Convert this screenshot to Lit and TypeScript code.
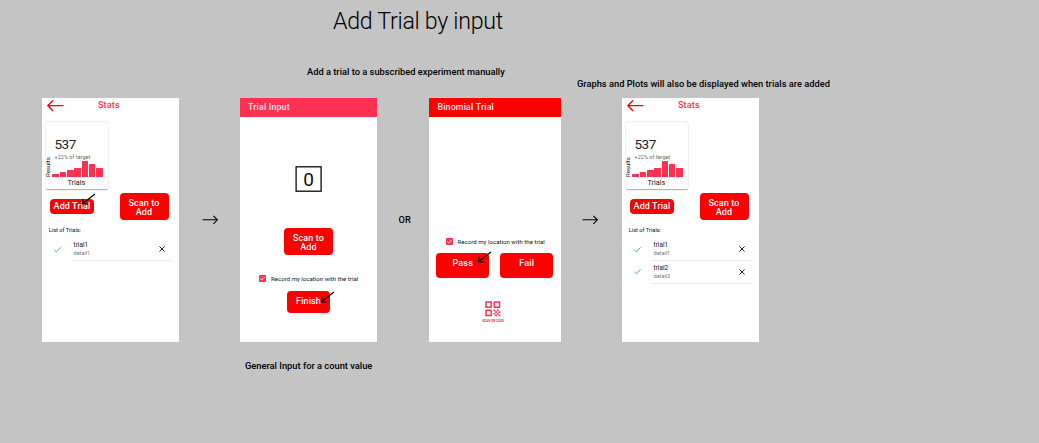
import { LitElement, html, svg, css } from "lit";
import { customElement, property } from "lit/decorators.js";

const shared = css`
  * { box-sizing: border-box; }
  :host { display: block; font-family: Roboto, "Liberation Sans", sans-serif; color: #111; }
  svg { display: block; }
  .screen { background: #fff; height: 244px; display: flex; flex-direction: column; overflow: hidden; }
  .btn {
    background: #ff0000; color: #fff; border-radius: 4px; font-weight: 500; font-size: 9px;
    line-height: 9.3px; text-align: center; white-space: nowrap;
  }
  .bar { height: 19px; flex: none; padding-left: 8px; line-height: 18.5px; font-size: 8.8px; font-weight: 500; color: #ffe9ec; letter-spacing: 0.19px; }
  .check { display: flex; align-items: center; height: 7px; font-size: 6px; line-height: 7px; white-space: nowrap; letter-spacing: 0.05px; }
  .check svg { margin-right: 4.7px; flex: none; }
  .scan { width: 49px; height: 27px; padding-top: 5.5px; letter-spacing: 0.1px; }
`;

const checkbox = svg`<svg width="7" height="7" viewBox="0 0 7 7">
  <rect width="7" height="7" rx="0.8" fill="#ff3150"/>
  <path d="M1.3 3.6 2.8 5 5.8 1.9" fill="none" stroke="#fff" stroke-width="0.9"/>
</svg>`;

@customElement("stats-screen")
class StatsScreen extends LitElement {
  @property({ type: Array }) trials: string[][] = [];

  static styles = [shared, css`
    .top { display: flex; align-items: center; height: 16px; padding: 0 0 1px 5px; flex: none; }
    .title { margin-left: 34px; color: #ff3150; font-size: 9px; font-weight: 500; line-height: 15px; letter-spacing: 0.15px; }
    .card {
      margin: 8px 0 0 4.4px; width: 62px; height: 67px; flex: none; border-radius: 1.5px;
      box-shadow: 0 0.8px 1.2px rgba(0,0,0,.34), 0 0 1px rgba(0,0,0,.05);
      display: grid; grid-template-columns: 5.6px 1fr; grid-template-rows: 31px 8px 16px 12px;
    }
    .total { grid-column: 2; padding: 14.5px 0 0 2.6px; font-size: 13.6px; line-height: 15px; letter-spacing: -0.6px; color: #222; }
    .delta { grid-column: 2; padding: 0 0 0 2.6px; font-size: 5.5px; line-height: 8px; color: #666; white-space: nowrap; letter-spacing: 0.01px; }
    .axis { writing-mode: vertical-rl; transform: translateX(-0.8px) rotate(180deg); font-size: 6px; line-height: 6px; grid-row: 2 / 4; grid-column: 1; white-space: nowrap; }
    .bars { grid-row: 3; grid-column: 2; display: flex; align-items: flex-end; gap: 0.6px; height: 16px; padding-left: 0.4px; }
    .col { width: 6.7px; background: #ff3150; border-radius: 0.5px 0.5px 0 0; flex: none; }
    .label { grid-row: 4; grid-column: 1 / 3; text-align: center; font-size: 7.2px; line-height: 12px; padding-right: 2px; }
    .actions { display: flex; margin: 4px 0 0 8px; height: 27px; flex: none; }
    .add { width: 44px; height: 15px; margin: 6px 25.5px 0 0; line-height: 15px; letter-spacing: 0.1px; }
    .heading { margin: 6px 0 0 6.7px; font-size: 5.7px; line-height: 8px; flex: none; }
    .row { display: flex; align-items: center; height: 22.5px; padding-left: 12px; flex: none; }
    .list { margin-top: 4.5px; }
    .body { margin-left: 10px; width: 101px; height: 22.5px; padding: 0 7px 0 2.6px; display: flex; align-items: center; justify-content: space-between; border-bottom: 1px solid #eee; }
    .name { font-size: 6.4px; line-height: 8px; }
    .detail { font-size: 5.5px; line-height: 8px; color: #777; }
  `];

  render() {
    return html`<div class="screen">
      <div class="top">
        <svg width="17" height="12" viewBox="0 0 17 12"><path d="M6 .5.9 5.6 6 10.9M.9 5.6H16.5" fill="none" stroke="#f00" stroke-width="1.4"/></svg>
        <div class="title">Stats</div>
      </div>
      <div class="card">
        <div class="total">537</div>
        <div class="delta">+22% of target</div>
        <div class="axis">Results</div>
        <div class="bars">${[3, 5, 7, 9, 16, 13, 9].map((h) => html`<div class="col" style="height:${h}px"></div>`)}</div>
        <div class="label">Trials</div>
      </div>
      <div class="actions">
        <div class="btn add">Add Trial</div>
        <div class="btn scan">Scan to<br>Add</div>
      </div>
      <div class="heading">List of Trials:</div>
      <div class="list">${this.trials.map(([name, detail]) => html`<div class="row">
        <svg width="7" height="6" viewBox="0 0 7 6"><path d="M.4 3 2.3 4.8 6.6.4" fill="none" stroke="#2fc87f" stroke-width="1"/></svg>
        <div class="body">
          <div><div class="name">${name}</div><div class="detail">${detail}</div></div>
          <svg width="6" height="6" viewBox="0 0 6 6"><path d="M.4.4 5.6 5.6M5.6.4.4 5.6" stroke="#222" stroke-width="1"/></svg>
        </div>
      </div>`)}</div>
    </div>`;
  }
}

@customElement("count-screen")
class CountScreen extends LitElement {
  static styles = [shared, css`
    .screen { align-items: center; }
    .bar { width: 100%; background: #ff3150; }
    .count { display: grid; grid-template: 100% / 100%; place-items: center; margin-top: 49px; width: 27px; height: 26px; flex: none; }
    .count > * { grid-area: 1 / 1; }
    .value { font-size: 19px; line-height: 26px; padding-top: 1px; }
    .scan { margin-top: 36px; }
    .check { margin: 20px 0 0 0.6px; }
    .finish { width: 43px; height: 22px; margin: 9px 0 0; padding-top: 5.6px; letter-spacing: 0.1px; }
  `];

  render() {
    return html`<div class="screen">
      <div class="bar">Trial Input</div>
      <div class="count">
        <svg width="27" height="26" viewBox="0 0 27 26"><rect x="1.1" y="0.8" width="25" height="24.4" fill="none" stroke="#000" stroke-width="1.25"/></svg>
        <div class="value">0</div>
      </div>
      <div class="btn scan">Scan to<br>Add</div>
      <div class="check">${checkbox}Record my location with the trial</div>
      <div class="btn finish">Finish</div>
    </div>`;
  }
}

@customElement("binomial-screen")
class BinomialScreen extends LitElement {
  static styles = [shared, css`
    .bar { background: #ff0000; }
    .check { margin: 121px 0 0 16.5px; flex: none; }
    .pair { display: flex; gap: 11px; margin: 8px 0 0 6.8px; }
    .choice { width: 53px; height: 25px; padding-top: 5.6px; letter-spacing: 0.18px; }
    .qr { margin: 23px 0 0 52.7px; width: 22px; display: flex; flex-direction: column; align-items: center; }
    .caption { margin-top: 2px; font-size: 3.1px; line-height: 4px; font-weight: 700; color: #f03848; white-space: nowrap; }
  `];

  render() {
    return html`<div class="screen">
      <div class="bar">Binomial Trial</div>
      <div class="check">${checkbox}Record my location with the trial</div>
      <div class="pair">
        <div class="btn choice">Pass</div>
        <div class="btn choice">Fail</div>
      </div>
      <div class="qr">
        <svg width="16" height="16" viewBox="0 0 16 16">
          <g fill="none" stroke="#ff3150" stroke-width="1.5">
            <rect x="1" y="1" width="5.2" height="5.2"/><rect x="9.3" y="1" width="5.2" height="5.2"/><rect x="1" y="9.3" width="5.2" height="5.2"/>
          </g>
          <path fill="#ff3150" d="M8.5 8.5h1.7v1.7H8.5zM11.9 8.5h1.7v1.7h-1.7zM10.2 10.2h1.7v1.7h-1.7zM13.6 10.2h1.7v1.7h-1.7zM8.5 11.9h1.7v1.7H8.5zM11.9 11.9h1.7v1.7h-1.7zM10.2 13.6h1.7v1.7h-1.7zM13.6 13.6h1.7v1.7h-1.7z"/>
        </svg>
        <div class="caption">SCAN QR CODE</div>
      </div>
    </div>`;
  }
}

@customElement("app-root")
class AppRoot extends LitElement {
  static styles = css`
    :host { display: block; font-family: Roboto, "Liberation Sans", sans-serif; color: #000; }
    .board { position: relative; width: 1039px; height: 443px; background: #c4c4c4; overflow: hidden; }
    .board > * { position: absolute; }
    .heading { left: 333px; top: 7px; font-size: 23.2px; line-height: 29px; font-weight: 300; white-space: nowrap; letter-spacing: -0.3px; }
    .note { font-size: 9.3px; line-height: 12px; font-weight: 500; white-space: nowrap; }
    .manual { left: 307px; top: 66px; }
    .graphs { left: 577px; top: 78.4px; }
    .general { left: 245px; top: 360px; }
    .or { left: 398.5px; top: 214px; }
    .before { left: 42px; top: 98px; width: 137px; }
    .count { left: 240px; top: 98px; width: 137px; }
    .binomial { left: 429.4px; top: 98px; width: 132px; }
    .after { left: 622px; top: 98px; width: 137px; }
    .next-a { left: 202px; top: 215px; }
    .next-b { left: 582px; top: 215px; }
    .tap-add { left: 81px; top: 192.5px; }
    .tap-finish { left: 320px; top: 290.5px; }
    .tap-pass { left: 476.5px; top: 250.5px; }
  `;

  private next(cls: string) {
    return html`<svg class=${cls} width="17" height="10" viewBox="0 0 17 10"><path d="M.5 4.8H15.3M11.4.8 15.4 4.8 11.4 8.8" fill="none" stroke="#000" stroke-width="1.1"/></svg>`;
  }

  private tap(cls: string) {
    return html`<svg class=${cls} width="15" height="13" viewBox="0 0 15 13"><path d="M14 1 1.4 10.8M2.2 5.8 1.4 10.8 6.6 11.2" fill="none" stroke="#000" stroke-width="1.2"/></svg>`;
  }

  render() {
    return html`<div class="board">
      <div class="heading">Add Trial by input</div>
      <div class="note manual">Add a trial to a subscribed experiment manually</div>
      <div class="note graphs">Graphs and Plots will also be displayed when trials are added</div>
      <div class="note general">General Input for a count value</div>
      <div class="note or">OR</div>
      <stats-screen class="before" .trials=${[["trial1", "detail1"]]}></stats-screen>
      <count-screen class="count"></count-screen>
      <binomial-screen class="binomial"></binomial-screen>
      <stats-screen class="after" .trials=${[["trial1", "detail1"], ["trial2", "detail3"]]}></stats-screen>
      ${this.next("next-a")}${this.next("next-b")}
      ${this.tap("tap-add")}${this.tap("tap-finish")}${this.tap("tap-pass")}
    </div>`;
  }
}
